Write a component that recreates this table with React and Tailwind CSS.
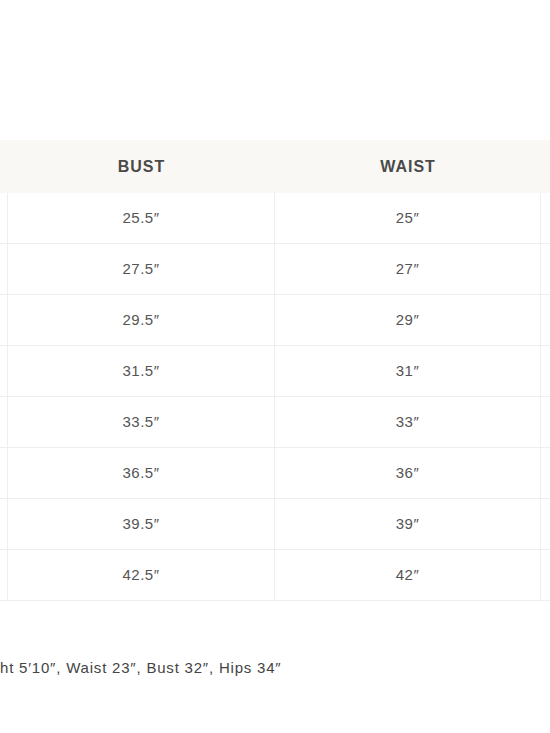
export default function App() {
  const rows = [
    ["25.5″", "25″"],
    ["27.5″", "27″"],
    ["29.5″", "29″"],
    ["31.5″", "31″"],
    ["33.5″", "33″"],
    ["36.5″", "36″"],
    ["39.5″", "39″"],
    ["42.5″", "42″"],
  ];
  return (
    <div className="w-[550px] h-[733px] bg-white overflow-hidden relative" style={{ fontFamily: '"Liberation Sans", Arial, sans-serif' }}>
      <div className="h-[140px]" />
      <div className="w-[650px]">
        <div className="grid grid-cols-[8px_267px_266px_109px] h-[53px] bg-[#faf8f4] items-center text-[16px] font-bold text-[#4a4a4a] tracking-[1px]">
          <div />
          <div className="text-center">BUST</div>
          <div className="text-center">WAIST</div>
          <div />
        </div>
        {rows.map((r, i) => (
          <div key={i} className="grid grid-cols-[8px_267px_266px_109px] h-[51px] border-b border-[#eeeeec] text-[15px] tracking-[0.5px] text-[#555]">
            <div className="border-r border-[#eeeeec]" />
            <div className="flex items-center justify-center border-r border-[#eeeeec]">{r[0]}</div>
            <div className="flex items-center justify-center border-r border-[#eeeeec]">{r[1]}</div>
            <div />
          </div>
        ))}
      </div>
      <div className="mt-[56px] text-[15px] tracking-[0.8px] text-[#444] whitespace-nowrap">ht 5′10″, Waist 23″, Bust 32″, Hips 34″</div>
    </div>
  );
}
